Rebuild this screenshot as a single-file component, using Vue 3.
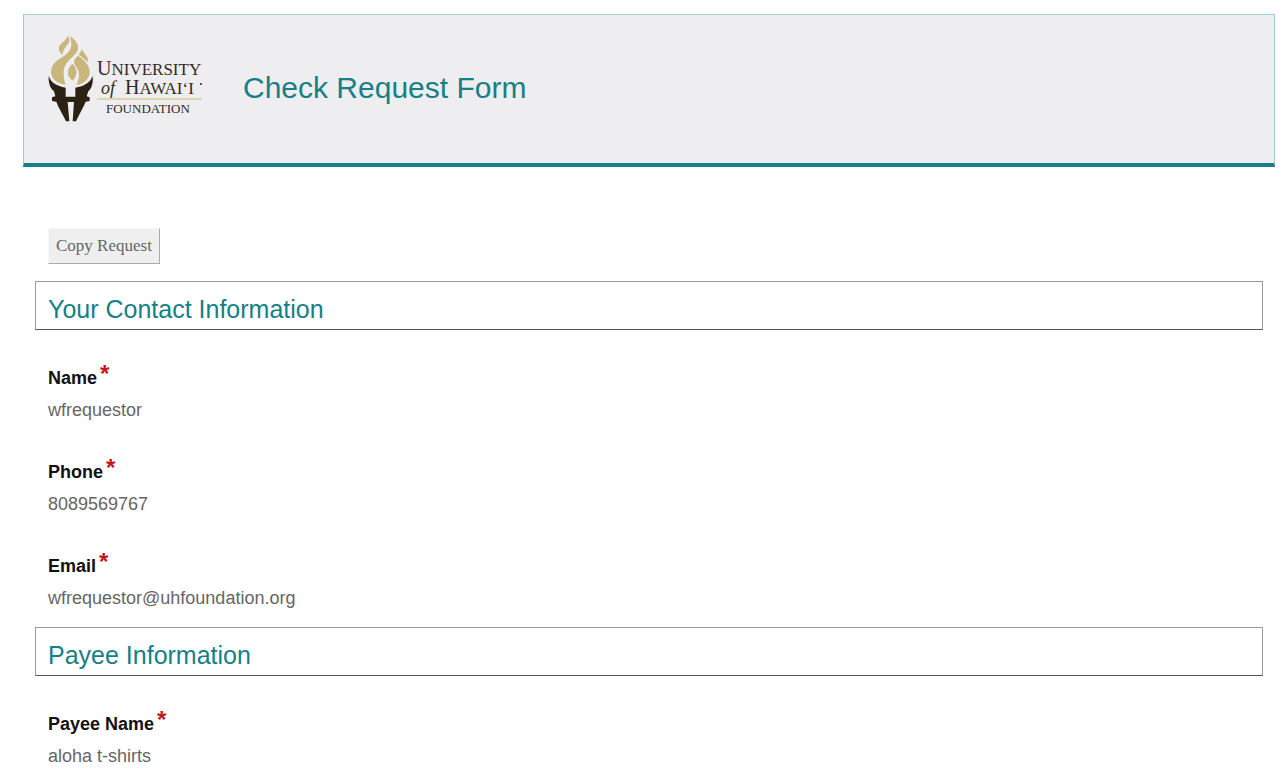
<template>
    <div class="page">
        <header class="banner">
            <svg class="logo" viewBox="0 0 165 100" width="165" height="100" role="img" aria-label="University of Hawaiʻi Foundation">
                <g transform="scale(0.3333)">
                    <path class="gold" d="M84 21 C91 31 91 39 86 46 C78 57 69 64 68 80 C56 74 53 59 62 49 C68 42 80 36 84 21 Z" />
                    <path class="flame" d="M84 19 C104 29 119 45 116 64 C113 80 92 91 81 107 C70 123 70 144 79 172 C50 171 27 151 32 124 C36 98 62 91 79 76 C94 63 96 43 84 19 Z" />
                    <path class="gold" d="M126 57 C125 72 140 80 144 93 C145 99 142 103 137 104 C132 91 122 86 115 79 C122 74 127 67 126 57 Z" />
                    <path class="flame" d="M113 81 C127 88 149 106 151 129 C152 153 133 172 106 173 C119 149 117 130 106 116 C100 108 98 101 102 94 C105 89 109 85 113 81 Z" />
                    <path class="gold" d="M97 107 C109 118 113 134 106 147 L98 158 C87 149 82 139 84 128 C86 119 92 113 97 107 Z" />
                    <path class="torch" d="M26 144 C33 164 50 174 77 179 L77 206 H106 L106 179 C132 175 151 164 158 144 C160 165 155 182 145 190 L140 205 L149 208 V219 L137 221 C130 239 118 257 108 280 H98 L102 222 H83 L88 280 H78 C69 258 55 240 49 221 L36 219 V208 L46 205 L42 190 C30 181 25 164 26 144 Z" />
                </g>
                <text class="logo-name" x="57" y="47"><tspan class="initial">U</tspan>NIVERSITY</text>
                <text class="logo-of" x="61" y="66">of</text>
                <text class="logo-name" x="85" y="66"><tspan class="initial">H</tspan>AWAI‘I</text>
                <circle class="torch" cx="161" cy="56" r="1" />
                <path class="rule" d="M57 71 H162" />
                <text class="logo-unit" x="66" y="85">FOUNDATION</text>
            </svg>
            <h1>Check Request Form</h1>
        </header>

        <main class="form">
            <button type="button" class="copy">Copy Request</button>

            <section v-for="section in sections" :key="section.title">
                <h2>{{ section.title }}</h2>
                <dl class="fields">
                    <div v-for="field in section.fields" :key="field.label" class="field">
                        <dt>{{ field.label }}<span class="required">*</span></dt>
                        <dd>{{ field.value }}</dd>
                    </div>
                </dl>
            </section>
        </main>
    </div>
</template>

<script setup>
const sections = [
    {
        title: 'Your Contact Information',
        fields: [
            { label: 'Name', value: 'wfrequestor' },
            { label: 'Phone', value: '8089569767' },
            { label: 'Email', value: 'wfrequestor@uhfoundation.org' },
        ],
    },
    {
        title: 'Payee Information',
        fields: [
            { label: 'Payee Name', value: 'aloha t-shirts' },
        ],
    },
]
</script>

<style>
body {
    background-color: #fff;
}
</style>

<style scoped>
.page {
    padding: 14px 10px 0 23px;
    font-family: "Liberation Sans", Arial, sans-serif;
}

.banner {
    display: flex;
    align-items: flex-start;
    padding: 13px 16px 35px;
    background-color: #eeeef0;
    border: 1px solid #9fcdce;
    border-bottom: 4px solid #168086;
}

.logo {
    flex: none;
}

.gold,
.flame {
    fill: #c9b67a;
}

.flame {
    stroke: #eeeef0;
    stroke-width: 4px;
}

.torch {
    fill: #2b2214;
}

.rule {
    stroke: #ddd5ae;
    stroke-width: 2px;
}

.logo-name,
.logo-of,
.logo-unit {
    font-family: "Liberation Serif", "Times New Roman", serif;
    font-size: 17px;
    fill: #332b1f;
}

.initial {
    font-size: 20px;
}

.logo-of {
    font-size: 18px;
    font-style: italic;
}

.logo-unit {
    font-size: 13px;
}

h1 {
    margin: 42px 0 0 38px;
    font-size: 30px;
    line-height: 36px;
    font-weight: 400;
    color: #168086;
}

.form {
    padding: 61px 12px 0;
}

.copy {
    display: block;
    height: 36px;
    margin: 0 0 17px 13px;
    padding: 0 7px;
    font-family: "Liberation Serif", "Times New Roman", serif;
    font-size: 17px;
    color: #666;
    background-color: #efefef;
    border: 1px solid;
    border-color: #f6f6f6 #aaa #aaa #f6f6f6;
}

h2 {
    margin: 0;
    padding: 10px 12px 3px;
    font-size: 25px;
    line-height: 34px;
    font-weight: 400;
    color: #168086;
    border: 1px solid #999;
    border-bottom-color: #555;
}

.fields {
    margin: 0;
    padding: 36px 13px 17px;
    display: grid;
    gap: 38px;
}

.field {
    display: grid;
    gap: 8px;
}

dt {
    display: flex;
    gap: 3px;
    font-size: 18px;
    line-height: 24px;
    font-weight: 700;
    color: #111;
}

.required {
    font-size: 24px;
    line-height: 16px;
    color: #c4161c;
}

dd {
    margin: 0;
    font-size: 18px;
    line-height: 24px;
    color: #666;
}
</style>
